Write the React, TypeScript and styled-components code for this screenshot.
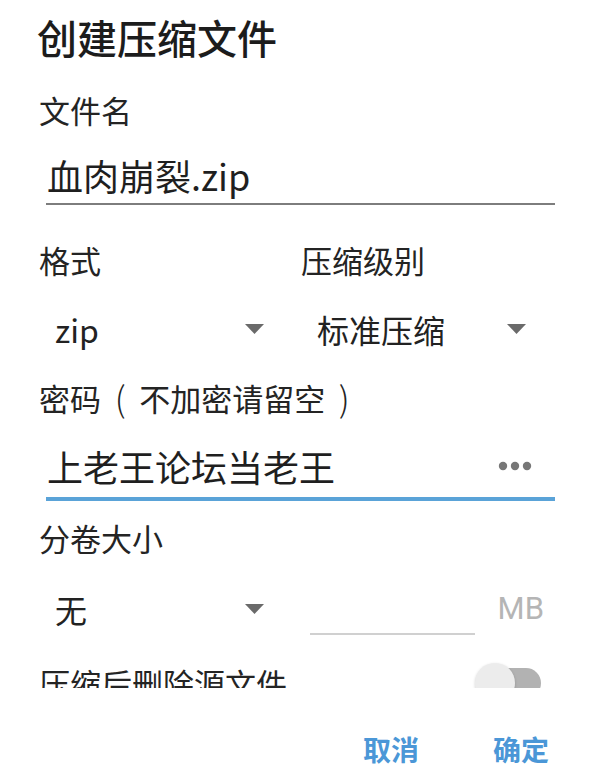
import React from "react";
import styled, { createGlobalStyle } from "styled-components";

const Global = createGlobalStyle`
  html, body { margin: 0; padding: 0; background: #ffffff; }
  body { font-family: "Noto Sans CJK SC", "Noto Sans", sans-serif; }
  * { box-sizing: border-box; }
`;

const Dialog = styled.div`
  width: 600px;
  height: 770px;
  display: flex;
  flex-direction: column;
  background: #ffffff;
  color: #212121;
  font-family: "Noto Sans CJK SC", "Noto Sans", sans-serif;
`;

const Title = styled.h1`
  flex-shrink: 0;
  margin: 0;
  padding: 11px 0 0 37px;
  font-size: 40px;
  line-height: 52px;
  font-weight: 500;
  color: #1c1c1c;
`;

const Content = styled.div`
  flex: 1 1 auto;
  min-height: 0;
  overflow: hidden;
  padding: 27px 45px 0 39px;
  display: flex;
  flex-direction: column;
  & > * {
    flex-shrink: 0;
  }
`;

const Label = styled.div<{ $top?: number }>`
  font-size: 31px;
  line-height: 40px;
  color: #242424;
  margin-top: ${(p) => p.$top ?? 0}px;
  white-space: nowrap;
`;

const Paren = styled.span`
  display: inline-block;
  width: 1.1em;
  text-align: center;
  font-size: 1.12em;
  line-height: 36px;
  font-weight: 300;
  vertical-align: top;
  padding-top: 1px;
`;

const TextField = styled.div<{ $focused?: boolean }>`
  margin-left: 7px;
  display: flex;
  align-items: center;
  padding: ${(p) => (p.$focused ? "26px 0 9px 1px" : "23px 0 6px 1px")};
  border-bottom: ${(p) => (p.$focused ? "4px solid #5aa3d8" : "2px solid #7d7d7d")};
`;

const FieldValue = styled.span`
  flex: 1;
  font-size: 36px;
  line-height: 44px;
  color: #1f1f1f;
  white-space: nowrap;
`;

const RevealButton = styled.span`
  display: flex;
  align-items: center;
  margin-right: 23px;
`;

const TwoCols = styled.div<{ $height: number; $top?: number }>`
  display: grid;
  grid-template-columns: 1fr 1fr;
  column-gap: 8px;
  height: ${(p) => p.$height}px;
  margin-top: ${(p) => p.$top ?? 0}px;
`;

const Column = styled.div`
  display: flex;
  flex-direction: column;
`;

const Spinner = styled.div`
  flex: 1;
  display: flex;
  align-items: center;
  justify-content: space-between;
  padding: 0 29px 0 16px;
`;

const SpinnerText = styled.span`
  font-size: 32px;
  line-height: 44px;
  color: #222222;
  white-space: nowrap;
`;

const SizeBox = styled.div`
  display: flex;
  align-items: center;
  padding: 0 11px 0 9px;
`;

const SizeInput = styled.div`
  flex: 1;
  height: 50px;
  margin-top: 2px;
  border-bottom: 2px solid #d0d0d0;
`;

const Unit = styled.span`
  margin-left: 23px;
  font-family: Roboto, "Noto Sans", sans-serif;
  font-size: 31px;
  line-height: 40px;
  color: #b5b5b5;
`;

const SwitchRow = styled.div`
  display: flex;
  align-items: center;
  justify-content: space-between;
  min-height: 48px;
  padding-right: 14px;
`;

const SwitchTrack = styled.div`
  position: relative;
  width: 66px;
  height: 40px;
  display: flex;
  align-items: center;
  justify-content: flex-end;
`;

const TrackBar = styled.div`
  width: 52px;
  height: 30px;
  border-radius: 15px;
  background: #b2b2b2;
`;

const Thumb = styled.div`
  position: absolute;
  left: 0;
  top: 0;
  width: 40px;
  height: 40px;
  border-radius: 50%;
  background: #ececec;
  box-shadow: 0 1px 3px rgba(0, 0, 0, 0.18);
`;

const Actions = styled.div`
  flex-shrink: 0;
  height: 82px;
  display: flex;
  justify-content: flex-end;
  align-items: flex-start;
  padding: 41px 25px 0 0;
  gap: 22px;
`;

const ActionButton = styled.button`
  border: none;
  background: transparent;
  padding: 0 26px;
  margin: 0;
  font-family: "Noto Sans CJK SC", "Noto Sans", sans-serif;
  font-size: 28px;
  line-height: 40px;
  font-weight: 700;
  color: #4b97d7;
  cursor: pointer;
`;

const Caret = () => (
  <svg width="19" height="10" viewBox="0 0 19 10" aria-hidden>
    <path d="M0 0 H19 L9.5 10 Z" fill="#6a6a6a" />
  </svg>
);

const Dots = () => (
  <svg width="34" height="10" viewBox="0 0 34 10" aria-hidden>
    <circle cx="5" cy="5" r="4.2" fill="#777" />
    <circle cx="17" cy="5" r="4.2" fill="#777" />
    <circle cx="29" cy="5" r="4.2" fill="#777" />
  </svg>
);

export default function App() {
  return (
    <>
      <Global />
      <Dialog>
        <Title>创建压缩文件</Title>
        <Content>
          <Label>文件名</Label>
          <TextField>
            <FieldValue>血肉崩裂.zip</FieldValue>
          </TextField>

          <TwoCols $height={138} $top={35}>
            <Column>
              <Label>格式</Label>
              <Spinner>
                <SpinnerText>zip</SpinnerText>
                <Caret />
              </Spinner>
            </Column>
            <Column>
              <Label>压缩级别</Label>
              <Spinner>
                <SpinnerText>标准压缩</SpinnerText>
                <Caret />
              </Spinner>
            </Column>
          </TwoCols>

          <Label>
            密码<Paren>(</Paren>不加密请留空<Paren>)</Paren>
          </Label>
          <TextField $focused>
            <FieldValue>上老王论坛当老王</FieldValue>
            <RevealButton>
              <Dots />
            </RevealButton>
          </TextField>

          <Label $top={17}>分卷大小</Label>
          <TwoCols $height={101}>
            <Spinner>
              <SpinnerText>无</SpinnerText>
              <Caret />
            </Spinner>
            <SizeBox>
              <SizeInput />
              <Unit>MB</Unit>
            </SizeBox>
          </TwoCols>

          <SwitchRow>
            <Label>压缩后删除源文件</Label>
            <SwitchTrack>
              <TrackBar />
              <Thumb />
            </SwitchTrack>
          </SwitchRow>
        </Content>
        <Actions>
          <ActionButton>取消</ActionButton>
          <ActionButton>确定</ActionButton>
        </Actions>
      </Dialog>
    </>
  );
}
